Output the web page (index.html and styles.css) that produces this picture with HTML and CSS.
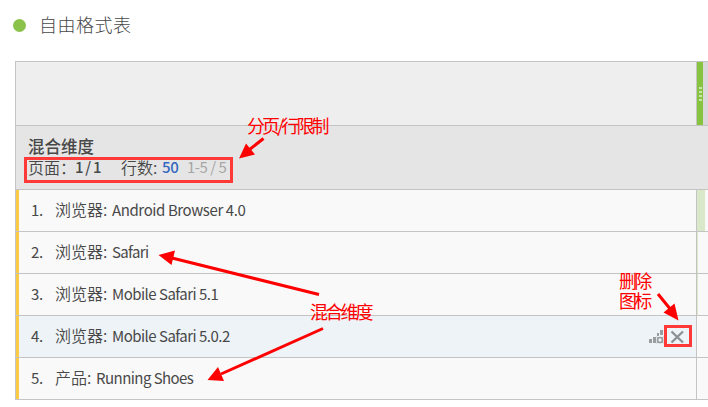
FILE: index.html
```html
<!DOCTYPE html>
<html lang="zh-CN">
<head>
<meta charset="utf-8">
<title>自由格式表</title>
<link rel="stylesheet" href="styles.css">
</head>
<body>
<main class="panel">
  <header class="title"><span class="dot"></span><h1>自由格式表</h1></header>
  <section class="table">
    <div class="head"><div class="head-main"></div><div class="handle"><i></i><i></i><i></i><i></i></div><div class="head-rest"></div></div>
    <div class="subhead">
      <div class="dimension">混合维度</div>
      <div class="paging"><span class="page-label">页面：</span><span class="page">1 / 1</span><span class="rows-label">行数:</span><span class="count">50</span><span class="range">1-5 / 5</span></div>
    </div>
    <div class="row"><div class="item"><span class="num">1.</span><span class="kind">浏览器:</span><span class="name">Android Browser 4.0</span></div><div class="value"><div class="bar wide"></div></div></div>
    <div class="row"><div class="item"><span class="num">2.</span><span class="kind">浏览器:</span><span class="name safari">Safari</span></div><div class="value"><div class="bar"></div></div></div>
    <div class="row"><div class="item"><span class="num">3.</span><span class="kind">浏览器:</span><span class="name mobile">Mobile Safari 5.1</span></div><div class="value"><div class="bar"></div></div></div>
    <div class="row"><div class="item active"><span class="num">4.</span><span class="kind">浏览器:</span><span class="name mobile">Mobile Safari 5.0.2</span>
      <svg class="tools" width="40" height="20" viewBox="649 326 40 20">
        <g fill="#999da0"><path d="M649 338h3v4h-3zM653 336h3v6h-3zM657 332h2v3h-2zM660 329h3v5h-3z"/></g>
        <circle cx="660" cy="339" r="2.500" fill="none" stroke="#999da0" stroke-width="1.700"/>
        <path d="M656.500 336l1.500 1M663.500 336l-1.500 1M656.500 342l1.500-1M663.500 342l-1.500-1" stroke="#999da0"/>
        <path d="M671.500 330.500l11.500 11M683 330.500l-11.500 11" stroke="#8b9094" stroke-width="2.300"/>
      </svg></div><div class="value"></div></div>
    <div class="row"><div class="item"><span class="num">5.</span><span class="kind product">产品:</span><span class="name shoes">Running Shoes</span></div><div class="value"></div></div>
  </section>
</main>
<svg class="arrows" width="708" height="407" viewBox="0 0 708 407">
  <g fill="none" stroke="#ff3838" stroke-width="3"><rect x="25.500" y="158.500" width="206" height="23"/><rect x="665.500" y="326.500" width="25" height="19"/></g>
  <g stroke="#f00" stroke-width="3"><path d="M263.500 138.500L249 150M319 294.500L172 258M323 328.500L221 374M658 294L671 310"/></g>
  <g fill="#f00"><path d="M239 158.500L246 143.500L255 154.500zM158.500 255L175 250.500L171.500 265zM207.500 380L218 367L224 381zM678.500 320.500L663.500 312.500L674.500 303.500z"/></g>
</svg>
<div class="note note-page">分页/行限制</div>
<div class="note note-dimension">混合维度</div>
<div class="note note-delete">删除<br>图标</div>
</body>
</html>
```
FILE: styles.css
```css
* { box-sizing: border-box; }
body {
  margin: 0;
  width: 708px;
  height: 407px;
  position: relative;
  overflow: hidden;
  background: #fff;
  color: #484848;
  font: 16px/20px "Noto Sans CJK SC", sans-serif;
}
.title { display: flex; align-items: center; height: 61px; padding: 0 0 13px 13px; }
.dot { width: 13px; height: 13px; border-radius: 50%; background: #8bc34a; margin: 3px 13px 0 0; }
h1 { margin: 0; font-size: 18px; font-weight: 300; line-height: 24px; letter-spacing: .5px; }
.table { margin-left: 15px; border: 1px solid #c4c4c4; border-width: 1px 0 0 1px; }
.head { display: flex; height: 64px; border-bottom: 1px solid #c4c4c4; background: #eee; }
.head-main { width: 681px; border-right: 1px solid #c4c4c4; }
.handle { width: 6px; background: #86c440; display: flex; flex-direction: column; align-items: center; padding-top: 25px; gap: 2px; }
.handle i { width: 3px; height: 2px; background: #c9e5aa; }
.head-rest { flex: 1; background: #d9d7d9; }
.subhead { height: 64px; padding: 10px 0 0 12px; border-bottom: 1px solid #c4c4c4; background: #e5e5e5; }
.dimension { font-weight: 500; font-size: 16.5px; line-height: 21px; }
.paging { display: flex; line-height: 20px; white-space: pre; }
.page-label { width: 47px; font-weight: 350; }
.page { width: 46px; font-size: 15px; font-weight: 500; letter-spacing: -.8px; }
.rows-label { width: 41px; font-weight: 350; }
.count { width: 25px; font-size: 15px; color: #3468c0; font-weight: 500; letter-spacing: -.4px; }
.range { font-size: 15px; color: #a5a5a5; letter-spacing: -.5px; }
.row { display: flex; height: 42px; border-bottom: 1px solid #c4c4c4; background: #f9f9f9; }
.item { width: 681px; display: flex; align-items: center; white-space: nowrap; border-left: 3px solid #ffcb47; border-right: 1px solid #c4c4c4; }
.active { background: #edf3f7; }
.num, .name { margin-top: -1px; }
.kind { margin-top: -3px; }
.num { width: 36px; padding-left: 12px; font-size: 15px; letter-spacing: -.4px; }
.kind { width: 57px; font-weight: 350; }
.product { width: 41px; }
.name { font-size: 15px; letter-spacing: -.4px; }
.safari { letter-spacing: -.65px; }
.mobile { letter-spacing: -.52px; }
.shoes { letter-spacing: -.55px; }
.value { flex: 1; }
.bar { width: 1px; height: 100%; background: #d9e8c9; }
.wide { width: 8px; }
.tools { margin-left: auto; margin-right: 7px; }
.arrows { position: absolute; left: 0; top: 0; }
.note { position: absolute; color: #f00; font-size: 18px; line-height: 20px; letter-spacing: -2.800px; white-space: nowrap; }
.note-page { left: 247px; top: 115px; letter-spacing: -2.9px; }
.note-dimension { left: 310px; top: 301px; }
.note-delete { left: 619px; top: 270px; }
```
